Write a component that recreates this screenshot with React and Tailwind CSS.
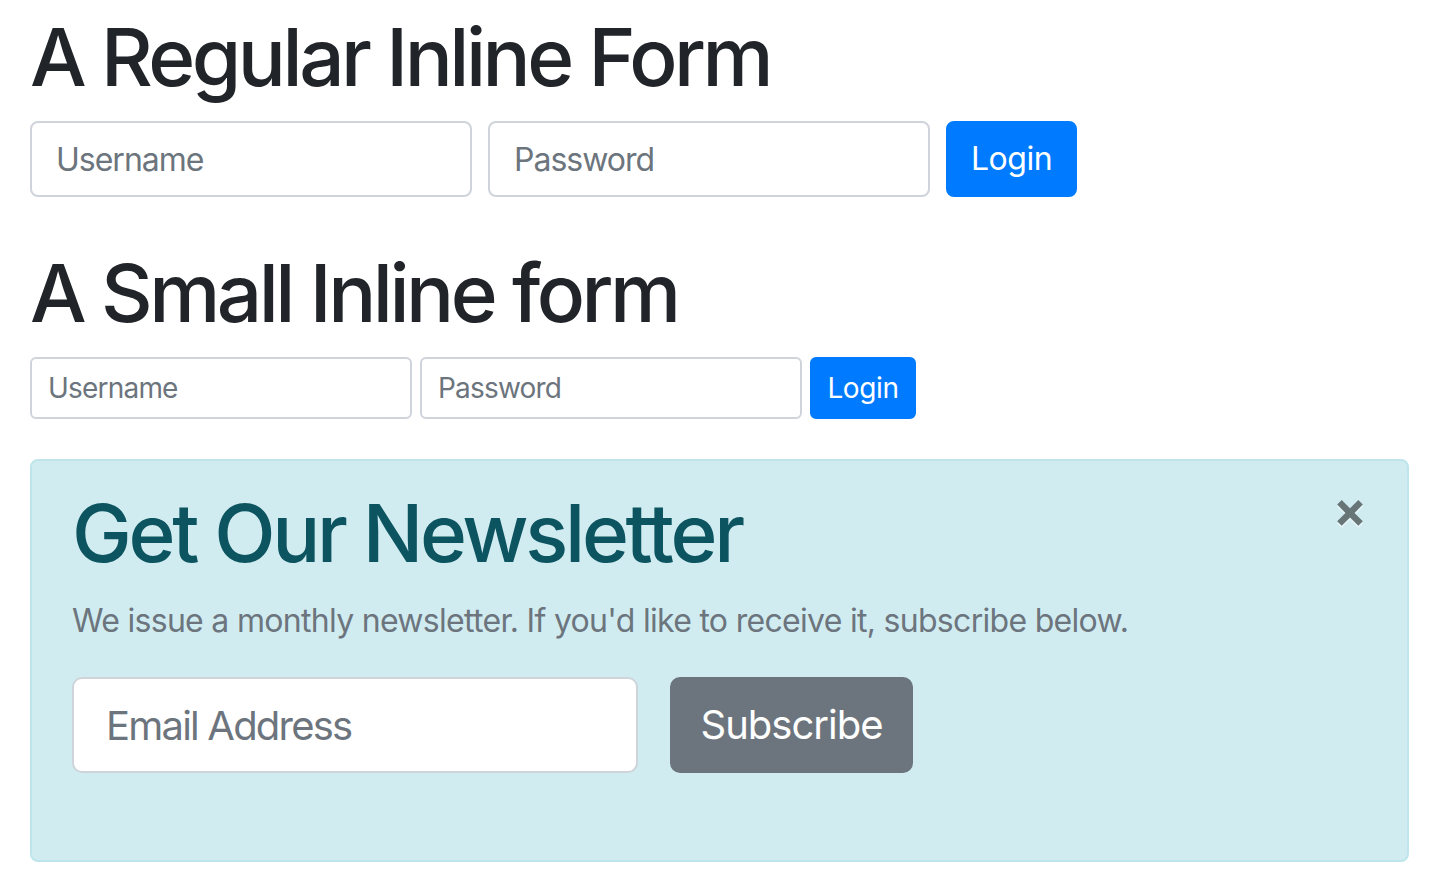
// Bootstrap-style inline forms and a dismissible newsletter alert (rendered at 2x)

const InlineForm = ({ size }) => {
    const isSmall = size === 'sm';
    const inputCls = isSmall
        ? 'w-[382px] h-[62px] px-4 text-[28px] rounded-[6px] tracking-[-0.8px]'
        : 'w-[442px] h-[76px] px-6 text-[32px] rounded-lg tracking-[-1px]';
    const btnCls = isSmall
        ? 'w-[106px] h-[62px] text-[28px] rounded-[6px] tracking-[-0.4px]'
        : 'w-[131px] h-[76px] text-[32px] rounded-lg tracking-[-0.5px]';

    return (
        <form className={`flex items-center ${isSmall ? 'gap-2 mb-10' : 'gap-4 mb-12'}`}>
            <input
                type="text"
                placeholder="Username"
                className={`${inputCls} bg-white border-2 border-[#ced4da] text-[#495057] placeholder:text-[#6c757d] outline-none`}
            />
            <input
                type="password"
                placeholder="Password"
                className={`${inputCls} bg-white border-2 border-[#ced4da] text-[#495057] placeholder:text-[#6c757d] outline-none`}
            />
            <button
                type="button"
                className={`${btnCls} bg-[#007bff] border-2 border-[#007bff] text-white flex items-center justify-center`}
            >
                Login
            </button>
        </form>
    );
};

export default function App() {
    return (
        <div className="min-h-screen bg-white pl-[30px] pt-[9px] font-['Inter','Liberation_Sans',sans-serif] text-[#212529]">
            {/* === Formulario normal === */}
            <h1 className="text-[80px] leading-[96px] font-medium mb-4 tracking-[-3.5px]">A Regular Inline Form</h1>
            <InlineForm size="md" />

            {/* === Formulario pequeño === */}
            <h1 className="text-[80px] leading-[96px] font-medium mb-4 tracking-[-3.5px]">A Small Inline form</h1>
            <InlineForm size="sm" />

            {/* === Alerta newsletter === */}
            <div className="relative w-[1379px] bg-[#d1ecf1] border-2 border-[#bee5eb] rounded-lg px-10 pt-6 pb-[87px] text-[#0c5460]">
                <button
                    type="button"
                    className="absolute top-0 right-0 px-10 py-6 text-[50px] leading-[48px] font-bold text-black opacity-50 [text-shadow:0_2px_0_#fff]"
                >
                    ×
                </button>
                <h1 className="text-[80px] leading-[96px] font-medium mb-4 tracking-[-3.3px]">Get Our Newsletter</h1>
                <p className="text-[32px] leading-[48px] text-[#6c757d] mb-8 tracking-[-0.7px]">
                    We issue a monthly newsletter. If you'd like to receive it, subscribe below.
                </p>
                <form className="flex items-center gap-8">
                    <input
                        type="email"
                        placeholder="Email Address"
                        className="w-[566px] h-[96px] px-8 text-[40px] rounded-[10px] tracking-[-1.8px] bg-white border-2 border-[#ced4da] text-[#495057] placeholder:text-[#6c757d] outline-none"
                    />
                    <button
                        type="button"
                        className="w-[243px] h-[96px] text-[40px] rounded-[10px] tracking-[-1px] bg-[#6c757d] border-2 border-[#6c757d] text-white flex items-center justify-center"
                    >
                        Subscribe
                    </button>
                </form>
            </div>
        </div>
    );
}
